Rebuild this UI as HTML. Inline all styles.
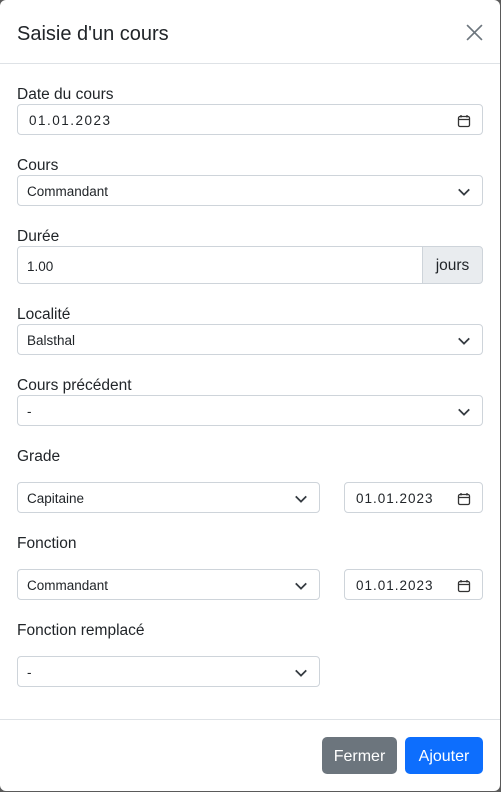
<!DOCTYPE html>
<html><head><style>
*{box-sizing:border-box;margin:0;padding:0}
body{width:501px;height:792px;background:#5a5a5a;font-family:"Liberation Sans",sans-serif;color:#212529;position:relative;overflow:hidden}
.m{position:absolute;left:0;top:0;width:500px;height:791px;background:#fff;border-radius:6px}
.a{position:absolute}
.lbl{font-size:15.5px;left:17px}
.in{position:absolute;border:1px solid #ced4da;border-radius:4px;height:31px;font-size:13.5px;padding:2px 9px 0;display:flex;align-items:center;background:#fff}
.in svg{position:absolute;right:11px}
.hr{position:absolute;left:0;width:500px;height:1px;background:#dee2e6}
.btn{position:absolute;top:737px;height:37px;border-radius:5px;color:#fff;font-size:16px;display:flex;align-items:center;justify-content:center;padding-top:2px}
</style></head><body>
<div class="m">
<div class="a" style="left:17px;top:23px;font-size:20px">Saisie d'un cours</div>
<svg class="a" style="left:466px;top:24px" width="17" height="17" viewBox="0 0 16 16"><path d="M1 1L15 15M15 1L1 15" stroke="#6c757d" stroke-width="1.6"/></svg>
<div class="hr" style="top:63px"></div>

<div class="a lbl" style="top:86px">Date du cours</div>
<div class="in" style="left:17px;top:104px;width:466px;padding-left:11px;letter-spacing:1.5px">01.01.2023<svg width="14" height="14" viewBox="0 0 14 14"><rect x="1.5" y="2.5" width="11" height="10" rx="1.5" fill="none" stroke="#333" stroke-width="1.3"/><path d="M1.5 5.5h11M4 1v2.5M10 1v2.5" stroke="#333" stroke-width="1.3"/></svg></div>

<div class="a lbl" style="top:157px">Cours</div>
<div class="in" style="left:17px;top:175px;width:466px">Commandant<svg width="14" height="14" viewBox="0 0 16 16"><path d="M2 5l6 6 6-6" fill="none" stroke="#343a40" stroke-width="2"/></svg></div>

<div class="a lbl" style="top:228px">Durée</div>
<div class="in" style="left:17px;top:246px;width:407px;height:38px;border-radius:4px 0 0 4px">1.00</div>
<div class="in" style="left:422px;top:246px;width:61px;height:38px;border-radius:0 4px 4px 0;background:#e9ecef;font-size:15.5px;justify-content:center">jours</div>

<div class="a lbl" style="top:306px">Localité</div>
<div class="in" style="left:17px;top:324px;width:466px">Balsthal<svg width="14" height="14" viewBox="0 0 16 16"><path d="M2 5l6 6 6-6" fill="none" stroke="#343a40" stroke-width="2"/></svg></div>

<div class="a lbl" style="top:377px">Cours précédent</div>
<div class="in" style="left:17px;top:395px;width:466px">-<svg width="14" height="14" viewBox="0 0 16 16"><path d="M2 5l6 6 6-6" fill="none" stroke="#343a40" stroke-width="2"/></svg></div>

<div class="a lbl" style="top:448px">Grade</div>
<div class="in" style="left:17px;top:482px;width:303px">Capitaine<svg width="14" height="14" viewBox="0 0 16 16"><path d="M2 5l6 6 6-6" fill="none" stroke="#343a40" stroke-width="2"/></svg></div>
<div class="in" style="left:344px;top:482px;width:139px;padding-left:11px;letter-spacing:1px">01.01.2023<svg width="14" height="14" viewBox="0 0 14 14"><rect x="1.5" y="2.5" width="11" height="10" rx="1.5" fill="none" stroke="#333" stroke-width="1.3"/><path d="M1.5 5.5h11M4 1v2.5M10 1v2.5" stroke="#333" stroke-width="1.3"/></svg></div>

<div class="a lbl" style="top:535px">Fonction</div>
<div class="in" style="left:17px;top:569px;width:303px">Commandant<svg width="14" height="14" viewBox="0 0 16 16"><path d="M2 5l6 6 6-6" fill="none" stroke="#343a40" stroke-width="2"/></svg></div>
<div class="in" style="left:344px;top:569px;width:139px;padding-left:11px;letter-spacing:1px">01.01.2023<svg width="14" height="14" viewBox="0 0 14 14"><rect x="1.5" y="2.5" width="11" height="10" rx="1.5" fill="none" stroke="#333" stroke-width="1.3"/><path d="M1.5 5.5h11M4 1v2.5M10 1v2.5" stroke="#333" stroke-width="1.3"/></svg></div>

<div class="a lbl" style="top:622px">Fonction remplacé</div>
<div class="in" style="left:17px;top:656px;width:303px">-<svg width="14" height="14" viewBox="0 0 16 16"><path d="M2 5l6 6 6-6" fill="none" stroke="#343a40" stroke-width="2"/></svg></div>

<div class="hr" style="top:719px"></div>
<div class="btn" style="left:322px;width:75px;background:#6c757d">Fermer</div>
<div class="btn" style="left:405px;width:78px;background:#0d6efd">Ajouter</div>
</div>
</body></html>
